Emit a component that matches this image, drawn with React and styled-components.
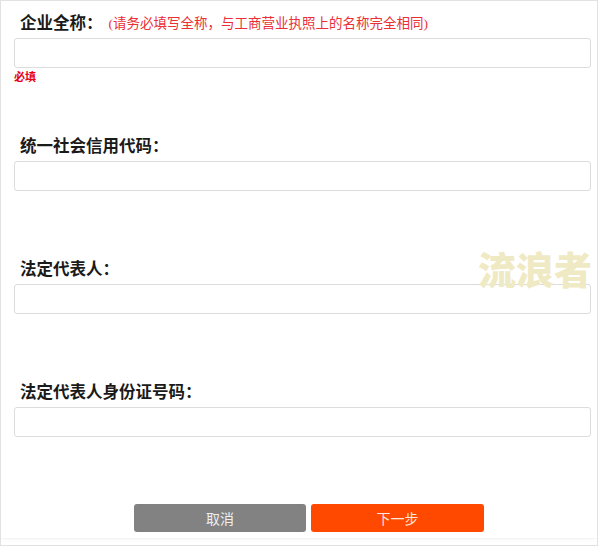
import React from "react";
import styled, { createGlobalStyle } from "styled-components";

const GlobalStyle = createGlobalStyle`
  html, body {
    margin: 0;
    padding: 0;
    background: #fff;
  }
  * {
    box-sizing: border-box;
  }
`;

const fields = [
  { label: "企业全称：", hint: "(请务必填写全称，与工商营业执照上的名称完全相同)", note: "必填" },
  { label: "统一社会信用代码：" },
  { label: "法定代表人：" },
  { label: "法定代表人身份证号码：" },
];

const App = () => {
  return (
    <>
      <GlobalStyle />
      <Page>
        <Form>
          {fields.map((f) => (
            <Field key={f.label}>
              <LabelRow>
                <Label>{f.label}</Label>
                {f.hint && <Hint>{f.hint}</Hint>}
              </LabelRow>
              <Input type="text" />
              <NoteArea>{f.note && <Note>{f.note}</Note>}</NoteArea>
            </Field>
          ))}
        </Form>

        <ButtonRow>
          <Button $variant="cancel">取消</Button>
          <Button $variant="next">下一步</Button>
        </ButtonRow>

        <Watermark>流浪者</Watermark>
      </Page>
    </>
  );
};

export default App;

/* Styled Components */
const Page = styled.div`
  position: relative;
  width: 598px;
  height: 546px;
  border: 1px solid #e2e2e2;
  background: #fff;
  padding-top: 11px;
  font-family: "Liberation Serif", "Noto Sans CJK SC", serif;
  overflow: hidden;
`;

const Form = styled.div`
  display: flex;
  flex-direction: column;
  padding: 0 6px 0 13px;
`;

const Field = styled.div`
  display: flex;
  flex-direction: column;
`;

const LabelRow = styled.div`
  display: flex;
  align-items: center;
  gap: 6px;
  height: 20px;
  padding-left: 6px;
  margin-bottom: 6px;
`;

const Label = styled.span`
  font-size: 16.5px;
  font-weight: 700;
  color: #1a1a1a;
  white-space: nowrap;
`;

const Hint = styled.span`
  font-size: 13.5px;
  color: #ea2f36;
  white-space: nowrap;
`;

const Input = styled.input`
  width: 577px;
  height: 30px;
  border: 1px solid #dcdcdc;
  border-radius: 3px;
  background: #fff;
  outline: none;
  padding: 0 8px;
  font-size: 14px;
`;

const NoteArea = styled.div`
  height: 67px;
  padding-top: 2px;
`;

const Note = styled.span`
  display: block;
  font-family: "Noto Sans CJK SC", sans-serif;
  font-size: 11px;
  line-height: 12px;
  font-weight: 700;
  color: #e60012;
`;

const ButtonRow = styled.div`
  display: flex;
  gap: 5px;
  padding-left: 133px;
  padding-bottom: 6px;
  border-bottom: 1px solid #f4f4f4;
  box-shadow: 0 3px 4px -3px rgba(0, 0, 0, 0.06);
`;

const Button = styled.button`
  width: ${(p) => (p.$variant === "next" ? "173px" : "172px")};
  height: 28px;
  border: none;
  border-radius: 3px;
  background: ${(p) => (p.$variant === "next" ? "#ff4800" : "#828282")};
  color: ${(p) => (p.$variant === "next" ? "#ffe9dc" : "#eeeeee")};
  font-family: "Noto Sans CJK SC", sans-serif;
  font-size: 14px;
  cursor: pointer;
`;

const Watermark = styled.div`
  position: absolute;
  left: 477px;
  top: 241px;
  font-family: "Noto Sans CJK SC", sans-serif;
  font-size: 38px;
  font-weight: 900;
  line-height: 52px;
  color: #f0eac4;
  pointer-events: none;
`;
